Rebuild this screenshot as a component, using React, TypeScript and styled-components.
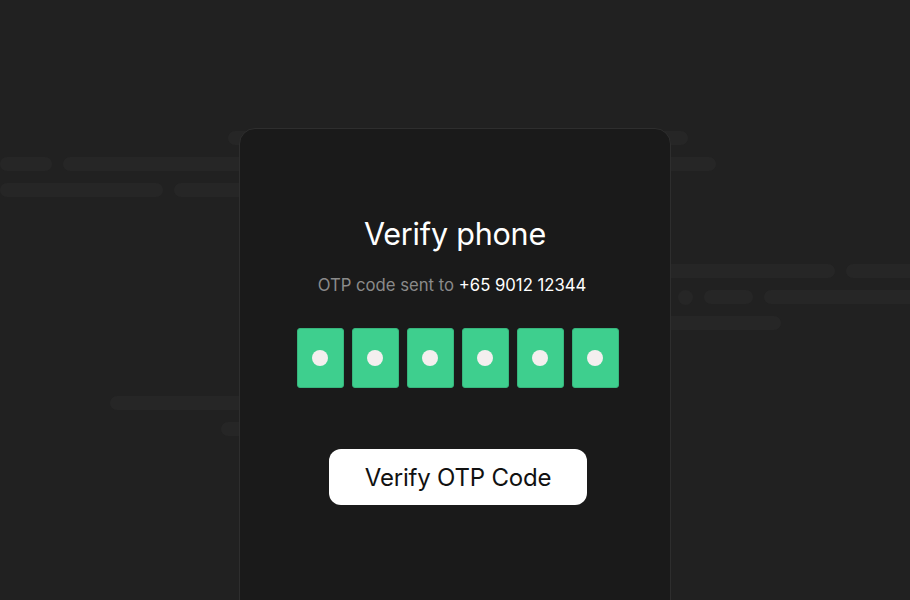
import React from 'react';
import styled, {createGlobalStyle} from "styled-components";

const GlobalStyle = createGlobalStyle`
  * {
    box-sizing: border-box;
  }

  html, body {
    margin: 0;
    padding: 0;
    background-color: #212121;
    overflow: hidden;
  }

  body {
    font-family: Inter, "Liberation Sans", sans-serif;
  }
`

type BarRow = {
    offset: number
    items: { width: number, round?: boolean }[]
}

const topRows: BarRow[] = [
    {offset: 228, items: [{width: 460}]},
    {offset: 0, items: [{width: 52}, {width: 653}]},
    {offset: 0, items: [{width: 163}, {width: 330}]},
]

const middleRows: BarRow[] = [
    {offset: 480, items: [{width: 355}, {width: 220}]},
    {offset: 678, items: [{width: 15, round: true}, {width: 49}, {width: 300}]},
    {offset: 500, items: [{width: 281}]},
]

const bottomRows: BarRow[] = [
    {offset: 110, items: [{width: 320}]},
    {offset: 221, items: [{width: 240}]},
]

const otpDigits = ['1', '2', '3', '4', '5', '6']

const renderGroup = (rows: BarRow[], top: number) => (
    <Group top={top}>
        {rows.map((row, i) => (
            <Row key={i} offset={row.offset}>
                {row.items.map((item, j) => (
                    <Bar key={j} width={item.width} round={item.round}/>
                ))}
            </Row>
        ))}
    </Group>
)

export default function App() {
    return (
        <>
            <GlobalStyle/>
            <Page>
                <Backdrop>
                    {renderGroup(topRows, 131)}
                    {renderGroup(middleRows, 67)}
                    {renderGroup(bottomRows, 66)}
                </Backdrop>
                <Card>
                    <Title>Verify phone</Title>
                    <Subtitle>OTP code sent to <Phone>+65 9012 12344</Phone></Subtitle>
                    <OtpRow>
                        {otpDigits.map(d => (
                            <OtpBox key={d}>
                                <Dot/>
                            </OtpBox>
                        ))}
                    </OtpRow>
                    <VerifyButton>Verify OTP Code</VerifyButton>
                </Card>
            </Page>
        </>
    );
}

const Page = styled.div`
  position: relative;
  width: 910px;
  height: 600px;
  overflow: hidden;
  background-color: #212121;
`

const Backdrop = styled.div`
  display: flex;
  flex-direction: column;
`

const Group = styled.div<{ top: number }>`
  display: flex;
  flex-direction: column;
  gap: 12px;
  margin-top: ${props => props.top}px;
`

const Row = styled.div<{ offset: number }>`
  display: flex;
  gap: 11px;
  padding-left: ${props => props.offset}px;
  height: 14px;
`

const Bar = styled.div<{ width: number, round?: boolean }>`
  flex: none;
  width: ${props => props.width}px;
  height: ${props => props.round ? 15 : 14}px;
  border-radius: 8px;
  background-color: #262626;
`

const Card = styled.div`
  position: absolute;
  top: 128px;
  left: 239px;
  width: 432px;
  height: 520px;
  display: flex;
  flex-direction: column;
  align-items: center;
  padding-top: 87px;
  background-color: #1a1a1a;
  border: 1px solid #2e2e2e;
  border-radius: 16px;
`

const Title = styled.h1`
  margin: 0;
  font-size: 30.5px;
  line-height: 36px;
  font-weight: 400;
  letter-spacing: -0.2px;
  color: #ffffff;
`

const Subtitle = styled.p`
  margin: 24px 6px 0 0;
  font-size: 16.7px;
  line-height: 19px;
  color: #8a8a8a;
`

const Phone = styled.span`
  color: #ffffff;
`

const OtpRow = styled.div`
  display: flex;
  gap: 8px;
  margin-top: 33px;
  padding-left: 5px;
`

const OtpBox = styled.div`
  width: 47px;
  height: 60px;
  display: flex;
  align-items: center;
  justify-content: center;
  background-color: #3ecf8e;
  border: 1px solid #37b57c;
  border-radius: 3px;
`

const Dot = styled.span`
  width: 16px;
  height: 16px;
  border-radius: 50%;
  background-color: #f4efef;
`

const VerifyButton = styled.button`
  margin-top: 61px;
  margin-left: 6px;
  width: 258px;
  height: 56px;
  border: none;
  border-radius: 12px;
  background-color: #ffffff;
  color: #111111;
  font-family: Inter, "Liberation Sans", sans-serif;
  font-size: 24px;
  letter-spacing: -0.2px;
  cursor: pointer;
`
